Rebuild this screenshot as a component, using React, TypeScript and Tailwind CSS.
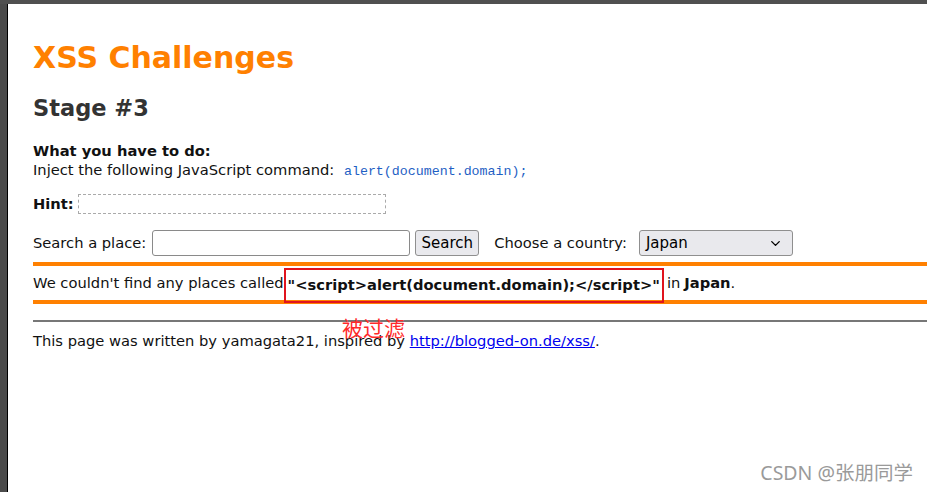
import { ChevronDown } from 'lucide-react'

const font = { fontFamily: '"DejaVu Sans", Verdana, sans-serif' }

export default function App() {
  return (
    <div
      className="relative h-[492px] w-[927px] overflow-hidden bg-white text-[14.7px] text-[#111]"
      style={font}
    >
      <div className="flex h-full border-t-4 border-[#505050]">
        {/* left frame */}
        <div className="w-[7px] shrink-0 bg-[#4b4b4b]" />
        <div className="w-px shrink-0 bg-black" />

        <div className="flex-1 pl-[25px] pt-[36px]">
          <h1 className="text-[30px] font-bold leading-[36px] text-[#ff8000]">XSS Challenges</h1>
          <h2 className="mt-[17px] text-[22.5px] font-bold leading-[30px] text-[#333]">Stage #3</h2>

          <div className="mt-[18px] leading-[19px]">
            <div className="font-bold">What you have to do:</div>
            <div>
              Inject the following JavaScript command:{' '}
              <code
                className="ml-[5px] text-[13.3px] text-[#1f5fc4]"
                style={{ fontFamily: '"Liberation Mono", monospace' }}
              >
                alert(document.domain);
              </code>
            </div>
          </div>

          <div className="mt-[13px] flex items-center gap-[4px] leading-[20px]">
            <span className="font-bold">Hint:</span>
            <span className="h-[20px] w-[308px] border border-dashed border-[#aaa]" />
          </div>

          <div className="mt-[16px] flex items-center leading-[20px]">
            <span>Search a place:</span>
            <span className="ml-[6px] h-[26px] w-[258px] rounded-[3px] border border-[#8a8a8a] bg-white" />
            <button className="ml-[5px] h-[26px] w-[64px] rounded-[3px] border border-[#8f8f8f] bg-[#e9e9ed] text-[15px] text-black">
              Search
            </button>
            <span className="ml-[15px]">Choose a country:</span>
            <div className="ml-[12px] flex h-[26px] w-[154px] items-center justify-between rounded-[3px] border border-[#8f8f8f] bg-[#e9e9ed] pl-[6px] pr-[9px] text-[15px] text-black">
              <span>Japan</span>
              <ChevronDown size={15} strokeWidth={2.2} />
            </div>
          </div>

          <div className="mt-[6px] w-[1000px] border-y-4 border-y-[#ff8000]">
            <div className="flex h-[34px] items-center">
              <span>We couldn't find any places called</span>
              <span className="relative z-10 mt-[2px] flex h-[35px] items-center self-start border-2 border-[#e0141e] px-[2px] text-[14.7px] font-bold">
                "&lt;script&gt;alert(document.domain);&lt;/script&gt;"
              </span>
              <span className="ml-[3px]">in</span>
              <span className="ml-[4px] font-bold">Japan</span>
              <span>.</span>
            </div>
          </div>

          <div className="mt-[16px] h-[2px] w-[1000px] bg-[#777]" />

          <div className="mt-[9px] leading-[20px]">
            This page was written by yamagata21, inspired by{' '}
            <a href="#" className="text-[#0000ee] underline">
              http://blogged-on.de/xss/
            </a>
            .
          </div>
        </div>
      </div>

      {/* annotation overlay */}
      <span
        className="absolute left-[342px] top-[314px] text-[21px] leading-[26px] text-[#ff2a2a]"
        style={{ fontFamily: '"Noto Sans CJK SC", sans-serif' }}
      >
        被过滤
      </span>

      {/* watermark */}
      <span
        className="absolute right-[14px] top-[460px] text-[19.5px] leading-[26px] text-[#9a9a9a]"
        style={{ fontFamily: '"Noto Sans", "Noto Sans CJK SC", sans-serif' }}
      >
        CSDN @张朋同学
      </span>
    </div>
  )
}
